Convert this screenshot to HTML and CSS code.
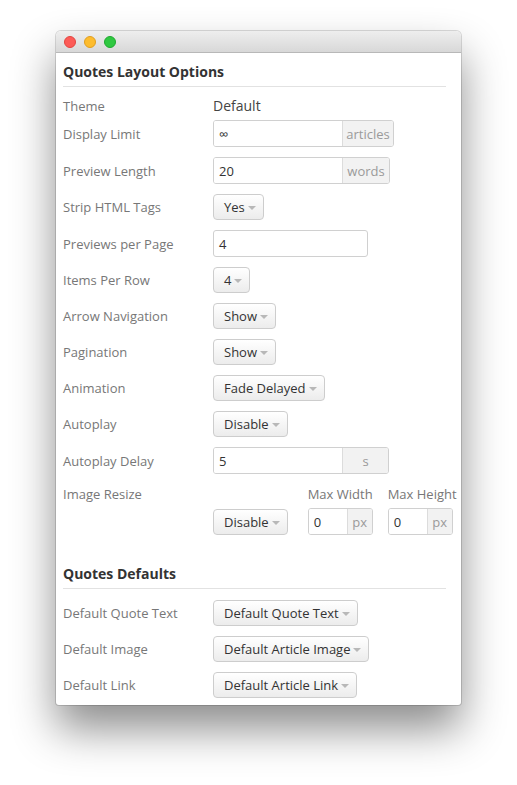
FILE: index.html
```html
<!DOCTYPE html>
<html>
<head>
<meta charset="utf-8">
<link rel="stylesheet" href="styles.css">
</head>
<body>
<div class="stage">
  <div class="window">
    <div class="titlebar">
      <span class="light red"></span>
      <span class="light yellow"></span>
      <span class="light green"></span>
    </div>
    <div class="content">
      <h2 class="section-title">Quotes Layout Options</h2>
      <div class="form">
        <div class="row row-theme">
          <span class="label">Theme</span>
          <span class="value">Default</span>
        </div>
        <div class="row">
          <span class="label">Display Limit</span>
          <div class="input-group">
            <span class="field w-main">∞</span><span class="addon w-articles">articles</span>
          </div>
        </div>
        <div class="row">
          <span class="label">Preview Length</span>
          <div class="input-group">
            <span class="field w-main">20</span><span class="addon w-words">words</span>
          </div>
        </div>
        <div class="row">
          <span class="label">Strip HTML Tags</span>
          <span class="btn">Yes<i class="caret"></i></span>
        </div>
        <div class="row">
          <span class="label">Previews per Page</span>
          <span class="field solo w-wide">4</span>
        </div>
        <div class="row">
          <span class="label">Items Per Row</span>
          <span class="btn">4<i class="caret"></i></span>
        </div>
        <div class="row">
          <span class="label">Arrow Navigation</span>
          <span class="btn">Show<i class="caret"></i></span>
        </div>
        <div class="row">
          <span class="label">Pagination</span>
          <span class="btn">Show<i class="caret"></i></span>
        </div>
        <div class="row">
          <span class="label">Animation</span>
          <span class="btn">Fade Delayed<i class="caret"></i></span>
        </div>
        <div class="row">
          <span class="label">Autoplay</span>
          <span class="btn">Disable<i class="caret"></i></span>
        </div>
        <div class="row">
          <span class="label">Autoplay Delay</span>
          <div class="input-group">
            <span class="field w-main">5</span><span class="addon w-s">s</span>
          </div>
        </div>
        <div class="row row-resize">
          <span class="label">Image Resize</span>
          <div class="resize-controls">
            <span class="btn">Disable<i class="caret"></i></span>
            <div class="sub-group first">
              <span class="sub-label">Max Width</span>
              <div class="input-group small">
                <span class="field w-px">0</span><span class="addon w-pxaddon">px</span>
              </div>
            </div>
            <div class="sub-group">
              <span class="sub-label">Max Height</span>
              <div class="input-group small">
                <span class="field w-px">0</span><span class="addon w-pxaddon">px</span>
              </div>
            </div>
          </div>
        </div>
      </div>

      <h2 class="section-title second">Quotes Defaults</h2>
      <div class="form form-defaults">
        <div class="row">
          <span class="label">Default Quote Text</span>
          <span class="btn">Default Quote Text<i class="caret"></i></span>
        </div>
        <div class="row">
          <span class="label">Default Image</span>
          <span class="btn">Default Article Image<i class="caret"></i></span>
        </div>
        <div class="row">
          <span class="label">Default Link</span>
          <span class="btn">Default Article Link<i class="caret"></i></span>
        </div>
      </div>
    </div>
  </div>
</div>
</body>
</html>
```
FILE: styles.css
```css
html, body {
  margin: 0;
  padding: 0;
  background: #ffffff;
}

body {
  font-family: "Open Sans", "Liberation Sans", sans-serif;
  color: #333;
}

.stage {
  padding: 31px 0 80px 56px;
}

.window {
  width: 405px;
  background: #fff;
  border-radius: 5px 5px 3px 3px;
  box-shadow: 0 24px 44px rgba(0, 0, 0, 0.45), 0 0 0 1px rgba(0, 0, 0, 0.14);
  overflow: hidden;
}

.titlebar {
  height: 21px;
  background: linear-gradient(#eeeeee, #d8d8d8);
  border-bottom: 1px solid #b8b8b8;
  display: flex;
  align-items: center;
  padding-left: 8px;
  gap: 8px;
}

.light {
  width: 12px;
  height: 12px;
  border-radius: 50%;
  box-sizing: border-box;
}
.light.red { background: #fc5b57; border: 1px solid #e2453f; }
.light.yellow { background: #fdbc2e; border: 1px solid #e09e1f; }
.light.green { background: #2fc841; border: 1px solid #1fa92f; }

.content {
  padding: 9px 15px 7px 7px;
}

.section-title {
  margin: 0;
  font-size: 14px;
  font-weight: 700;
  line-height: 20px;
  color: #333;
  padding-bottom: 4px;
  border-bottom: 1px solid #e2e2e2;
}

.section-title.second {
  margin-top: 29px;
}

.form {
  display: flex;
  flex-direction: column;
  gap: 10px;
  margin-top: 9px;
}

.form-defaults {
  margin-top: 11px;
}

.row {
  display: grid;
  grid-template-columns: 150px auto;
  align-items: center;
  justify-items: start;
}

.row-theme {
  height: 20px;
  margin-bottom: -6px;
}

.label {
  font-size: 13px;
  line-height: 20px;
  color: #777;
}

.value {
  font-size: 14px;
  line-height: 20px;
  color: #444;
}

.input-group {
  display: flex;
  height: 27px;
  border: 1px solid #d0d0d0;
  border-radius: 3px;
  box-sizing: border-box;
  overflow: hidden;
  background: #fff;
}

.field {
  display: flex;
  align-items: center;
  box-sizing: border-box;
  padding-left: 5px;
  font-size: 13px;
  color: #333;
  background: #fff;
}

.field.solo {
  height: 27px;
  border: 1px solid #d0d0d0;
  border-radius: 3px;
}

.addon {
  display: flex;
  align-items: center;
  justify-content: center;
  box-sizing: border-box;
  border-left: 1px solid #dcdcdc;
  background: #f2f2f2;
  color: #9a9a9a;
  font-size: 13px;
}

.w-main { width: 128px; }
.w-wide { width: 155px; }
.w-articles { width: 51px; }
.w-words { width: 47px; }
.w-s { width: 46px; }
.w-px { width: 38px; }
.w-pxaddon { width: 25px; }

.btn {
  display: inline-flex;
  align-items: center;
  height: 26px;
  box-sizing: border-box;
  padding: 0 7px 0 10px;
  border: 1px solid #cdcdcd;
  border-radius: 4px;
  background: linear-gradient(#ffffff, #ececec);
  font-size: 13px;
  color: #333;
  white-space: nowrap;
}

.caret {
  display: inline-block;
  width: 0;
  height: 0;
  margin-left: 3px;
  margin-top: 1px;
  border-left: 4px solid transparent;
  border-right: 4px solid transparent;
  border-top: 4px solid #b8b8b8;
}

.row-resize {
  align-items: start;
}

.resize-controls {
  display: flex;
  align-items: flex-end;
}

.sub-group {
  display: flex;
  flex-direction: column;
  gap: 4px;
  width: 65px;
  margin-left: 15px;
}

.sub-group.first {
  margin-left: 20px;
}

.sub-label {
  font-size: 13px;
  line-height: 20px;
  color: #777;
  white-space: nowrap;
}
```
